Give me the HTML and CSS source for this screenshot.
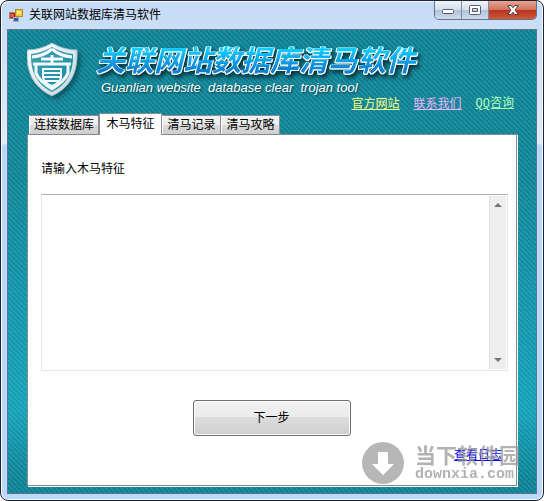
FILE: index.html
```
<!DOCTYPE html>
<html lang="zh-CN">
<head>
  <meta charset="UTF-8">
  <meta name="viewport" content="width=device-width, initial-scale=1.0">
  <title>关联网站数据库清马软件</title>
  <link rel="stylesheet" href="styles.css">
</head>
<body>
  <div class="window">
    <header class="titlebar">
      <svg class="app-icon" width="14" height="13" viewBox="0 0 14 13">
        <rect x="0.5" y="3.5" width="6" height="6" fill="#c9190c" stroke="#8e8e86"/>
        <rect x="1.5" y="5" width="3" height="3" fill="#ee6a4c"/>
        <rect x="4.5" y="8.5" width="5" height="4" fill="#3558c8" stroke="#a9adb5"/>
        <rect x="6.5" y="0.5" width="7" height="7" fill="#f7c733" stroke="#b48a2c"/>
        <rect x="8" y="2" width="4" height="3" fill="#ffe684"/>
      </svg>
      <span class="caption">关联网站数据库清马软件</span>
      <div class="controls">
        <button type="button" class="control" aria-label="最小化">
          <svg width="14" height="10" viewBox="0 0 14 10"><rect x="1.5" y="4.5" width="11" height="4" rx="1" fill="#fff" stroke="#555b69"/></svg>
        </button>
        <button type="button" class="control" aria-label="最大化">
          <svg width="12" height="10" viewBox="0 0 12 10"><path d="M1.5.5h9q1 0 1 1v7q0 1-1 1h-9q-1 0-1-1v-7q0-1 1-1zM3.500 3.500v3h5v-3z" fill="#fff" fill-rule="evenodd" stroke="#555b69"/></svg>
        </button>
        <button type="button" class="control close" aria-label="关闭">
          <svg width="12" height="10" viewBox="0 0 12 10"><path d="M.8.5h3.400L6 2.800 7.800.5h3.400L8 5l3.200 4.500H7.800L6 7.200 4.200 9.500H.8L4 5z" fill="#fff" stroke="#55454b"/></svg>
        </button>
      </div>
    </header>

    <main class="client">
      <div class="banner">
        <svg class="shield" width="56" height="62" viewBox="0 0 56 62">
          <defs>
            <linearGradient id="silver" x1="0" y1="0" x2="1" y2="1">
              <stop offset="0" stop-color="#fff"/>
              <stop offset="1" stop-color="#c3d3d9"/>
            </linearGradient>
            <linearGradient id="teal" x1="0" y1="0" x2="1" y2="1">
              <stop offset="0" stop-color="#3fa3b4"/>
              <stop offset="1" stop-color="#0f8ba3"/>
            </linearGradient>
          </defs>
          <path d="M25 1Q37 8 50 8Q52 42 25 54Q-2 42 0 8Q13 8 25 1z" fill="url(#silver)" stroke="#8fbfca"/>
          <path d="M25 5Q36 11 46 12Q47 39 25 50Q3 39 4 12Q14 11 25 5z" fill="url(#teal)"/>
          <g fill="none" stroke="#f6fafb" stroke-width="3">
            <path d="M25 7Q17 14 5 15M25 7Q33 14 45 15"/>
            <path d="M14 17h22M25 13v9M6 22h38"/>
            <path d="M9 23v8q3 8 16 16q13-8 16-16v-8"/>
            <path d="M16 27h18M16 31h18M16 35h18M18 39h14M16 26v10q2 5 9 8q7-3 9-8V26" stroke-width="2"/>
          </g>
        </svg>
        <div class="brand">
          <h1>关联网站数据库清马软件</h1>
          <p>Guanlian website&nbsp; database clear&nbsp; trojan tool</p>
        </div>
      </div>

      <nav class="links">
        <a class="official" href="#site">官方网站</a>
        <a class="contact" href="#contact">联系我们</a>
        <a class="qq" href="#qq">QQ咨询</a>
      </nav>

      <div class="tabs" role="tablist">
        <button type="button" class="tab wide" role="tab">连接数据库</button>
        <button type="button" class="tab active" role="tab" aria-selected="true">木马特征</button>
        <button type="button" class="tab" role="tab">清马记录</button>
        <button type="button" class="tab" role="tab">清马攻略</button>
      </div>

      <section class="panel">
        <label for="feature">请输入木马特征</label>
        <div class="memo">
          <textarea id="feature"></textarea>
          <div class="scrollbar">
            <svg width="8" height="4" viewBox="0 0 8 4"><path d="M0 4l4-4 4 4z" fill="#777"/></svg>
            <svg width="8" height="4" viewBox="0 0 8 4"><path d="M0 0l4 4 4-4z" fill="#777"/></svg>
          </div>
        </div>
        <button type="button" class="next">下一步</button>
        <div class="footer">
          <a href="#log">查看日志</a>
        </div>

        <div class="watermark">
          <svg width="42" height="42" viewBox="0 0 42 42">
            <path fill-rule="evenodd" d="M21 0a21 21 0 1 1 0 42a21 21 0 0 1 0-42zM16 10v12h-6l11 11 11-11h-6V10z" fill="#a0a0a0"/>
          </svg>
          <div>
            <div class="mark-name">当下软件园</div>
            <div class="mark-site">downxia.com</div>
          </div>
        </div>
      </section>
    </main>
  </div>
</body>
</html>
```
FILE: styles.css
```
* {
  box-sizing: border-box;
}

body {
  margin: 0;
  background: #fff;
  font-family: "Liberation Sans", "Noto Sans CJK SC", sans-serif;
  font-size: 12px;
  line-height: 16px;
  color: #000;
}

button {
  font: inherit;
  color: inherit;
  padding: 0;
}

.window {
  display: flex;
  flex-direction: column;
  min-height: 100vh;
  padding: 0 6px 6px;
  border: 1px solid #20242c;
  border-radius: 8px;
  background: linear-gradient(#c5dbf6 0, #dfebfa 143px, #b8d8fc 144px, #b8d8fc 100%);
  box-shadow: inset 0 0 0 1px #f3f9ff;
}

/* title bar */
.titlebar {
  display: flex;
  align-items: center;
  gap: 6px;
  height: 28px;
  padding-left: 2px;
}

.caption {
  flex: 1;
}

.controls {
  display: flex;
  align-self: flex-start;
  border: 1px solid #667387;
  border-top: 0;
  border-radius: 0 0 5px 5px;
  overflow: hidden;
}

.control {
  display: flex;
  align-items: center;
  justify-content: center;
  width: 27px;
  height: 18px;
  border: 0;
  border-right: 1px solid #7e8b9e;
  background: linear-gradient(#eff4fa 0, #d3dfed 50%, #b0c2d6 50%, #cbdcee 100%);
}

.control.close {
  width: 47px;
  border-right: 0;
  background: linear-gradient(#e6a593 0, #d0705c 50%, #b8321c 50%, #cc5a38 100%);
}

/* client area */
.client {
  flex: 1;
  display: flex;
  flex-direction: column;
  padding: 8px 19px 7px 19px;
  border: 1px solid #5b7686;
  background:
    linear-gradient(45deg, transparent 37%, rgba(255, 255, 255, 0.14) 50%, transparent 63%) 0 0 / 5px 5px,
    linear-gradient(#0d8193 0, #0e8496 30%, #14a2b9 82%, #0c8193 98%);
}

.banner {
  display: flex;
  gap: 13px;
  height: 58px;
}

.shield {
  margin-top: 4px;
  filter: drop-shadow(3px 3px 2px rgba(0, 40, 50, 0.5));
}

.brand h1 {
  margin: 0;
  padding: 0 6px 0 0;
  font: italic 700 29px/40px "Noto Sans CJK SC", sans-serif;
  color: transparent;
  background: linear-gradient(#12d0ff 25%, #0a80d0 80%);
  -webkit-background-clip: text;
  background-clip: text;
  filter: drop-shadow(1px 0 #fff) drop-shadow(-1px 0 #fff) drop-shadow(0 1px #fff) drop-shadow(2px 3px 2px rgba(0, 25, 35, 0.8));
}

.brand p {
  margin: 2px 0 0 5px;
  font-size: 13px;
  font-style: italic;
  color: #fff;
  text-shadow: 1px 1px 2px #033a44;
}

.links {
  display: flex;
  justify-content: flex-end;
  gap: 14px;
  padding-right: 3px;
}

.official {
  color: #ffff80;
}

.contact {
  color: #f0b4ff;
}

.qq {
  font-family: "Liberation Mono", "Noto Sans CJK SC", monospace;
  color: #b4ffb4;
}

/* tabs */
.tabs {
  display: flex;
  align-items: flex-end;
  margin-top: 1px;
  padding-left: 2px;
}

.tab {
  width: 59px;
  height: 19px;
  border: 1px solid #8b8d92;
  border-left-color: #fff;
  border-bottom: 0;
  background: linear-gradient(#f2f2f2 0, #ebebeb 50%, #dbdbdb 50%, #cecece 100%);
}

.tab.wide {
  width: 70px;
}

.tab.active {
  width: 63px;
  height: 22px;
  margin-bottom: -1px;
  padding-bottom: 2px;
  border-color: #8b8d92;
  background: #fff;
  z-index: 1;
}

.panel {
  position: relative;
  flex: 1;
  display: flex;
  flex-direction: column;
  padding: 26px 8px 22px 13px;
  border: 1px solid #848c92;
  box-shadow: 1px 1px #fff;
  background: #fff;
}

.memo {
  flex: 1;
  display: flex;
  margin-top: 17px;
  border: 1px solid #e3e6ea;
  border-top-color: #abadb3;
}

.memo textarea {
  flex: 1;
  min-width: 0;
  padding: 2px;
  border: 0;
  outline: 0;
  resize: none;
  font: inherit;
  background: #fff;
}

.scrollbar {
  display: flex;
  flex-direction: column;
  justify-content: space-between;
  align-items: center;
  width: 17px;
  margin: 1px;
  padding: 7px 0;
  border-left: 1px solid #e2e2e2;
  background: #eee;
}

.next {
  align-self: center;
  width: 158px;
  height: 36px;
  margin: 29px 6px 11px 0;
  border: 1px solid #707070;
  border-radius: 3px;
  background: linear-gradient(#f2f2f2 0, #ebebeb 48%, #dddddd 48%, #cfcfcf 100%);
  box-shadow: inset 0 0 0 1px #fafafa;
}

.footer {
  padding-right: 6px;
  text-align: right;
}

.footer a {
  color: #00f;
}

/* site mark over the lower right corner */
.watermark {
  position: absolute;
  right: -4px;
  bottom: 1px;
  display: flex;
  align-items: center;
  gap: 11px;
  color: #999;
  opacity: 0.75;
  pointer-events: none;
}

.mark-name {
  font: bold 21px/24px "Noto Sans CJK SC", sans-serif;
}

.mark-site {
  font: bold 15px/18px "Liberation Mono", monospace;
}
```
